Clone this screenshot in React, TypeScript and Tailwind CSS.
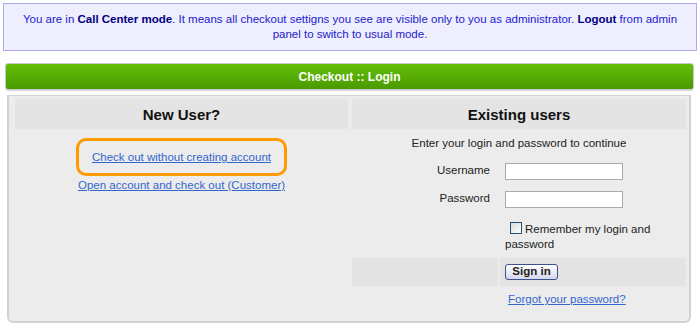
export default function App() {
  return (
    <div className="w-[700px] h-[329px] bg-white pt-[3px] font-['Liberation_Sans',Arial,sans-serif] text-[11.5px] text-[#222]">
      {/* Call center notice */}
      <div className="ml-[3px] w-[694px] h-[48px] border border-[#aaaaee] bg-[#eeeeff] px-[10px] pt-[8px] text-center leading-[15px] text-[#2222cc]">
        You are in <b className="text-[#000080]">Call Center mode</b>. It means all checkout settigns you see are visible only to you as administrator.{' '}
        <b className="text-[#000080]">Logout</b> from admin
        <br />
        panel to switch to usual mode.
      </div>

      {/* Title bar */}
      <div className="mt-[12px] ml-[5px] w-[689px] h-[27px] rounded-[3px] border border-[#c9c9c9] bg-linear-to-b from-[#63bf08] to-[#4a9a00] text-center text-[12px] font-bold leading-[27px] text-white shadow-[0_1px_1px_#d8d8d8]">
        Checkout :: Login
      </div>

      {/* Panel */}
      <div className="mt-[5px] ml-[7px] w-[684px] h-[228px] rounded-b-[6px] border-2 border-t border-[#d2d2d2] bg-[#ececec] pl-[6px] pr-[2px] pt-[3px]">
        <div className="grid grid-cols-[333px_334px] gap-x-[4px]">
          {/* New user */}
          <div>
            <div className="h-[30px] bg-[#e4e4e4] text-center text-[15px] font-bold leading-[31px] text-[#111]">New User?</div>
            <div className="mt-[9px] flex flex-col items-center">
              <div className="flex h-[38px] w-[211px] items-center justify-center rounded-[10px] border-[3px] border-[#ff9900]">
                <a className="text-[#3366cc] underline leading-[14px]" href="#">Check out without creating account</a>
              </div>
              <a className="mt-[1px] text-[#3366cc] underline leading-[16px]" href="#">Open account and check out (Customer)</a>
            </div>
          </div>

          {/* Existing users */}
          <div>
            <div className="h-[30px] bg-[#e4e4e4] text-center text-[15px] font-bold leading-[31px] text-[#111]">Existing users</div>
            <div className="mt-[7px] text-center leading-[14px]">Enter your login and password to continue</div>
            <div className="mt-[8px] grid grid-cols-[146px_186px] gap-[2px]">
              <div className="flex h-[26px] items-center justify-end pr-[8px]">Username</div>
              <div className="flex h-[26px] items-center pl-[5px]">
                <div className="h-[17px] w-[118px] border border-[#a5acb2] bg-white" />
              </div>
              <div className="flex h-[26px] items-center justify-end pr-[8px]">Password</div>
              <div className="flex h-[26px] items-center pl-[5px]">
                <div className="h-[17px] w-[118px] border border-[#a5acb2] bg-white" />
              </div>
              <div className="h-[42px]" />
              <div className="h-[42px] w-[170px] pl-[5px] pt-[8px] leading-[15px]">
                <span className="ml-[5px] mr-[3px] inline-block h-[12px] w-[12px] align-[-1px] border border-[#1c5180] bg-linear-to-br from-[#dcdcd6] to-white" />
                Remember my login and password
              </div>
              <div className="h-[28px] bg-[#e4e4e4]" />
              <div className="flex h-[28px] items-center bg-[#e4e4e4] pl-[5px]">
                <div className="flex h-[16px] w-[53px] items-center justify-center rounded-[3px] border border-[#3c4f8f] bg-linear-to-b from-white to-[#d6d6ee] text-[11.5px] font-bold text-[#222]">
                  Sign in
                </div>
              </div>
              <div />
              <div className="pl-[8px] pt-[4px] leading-[14px]">
                <a className="text-[#3366cc] underline" href="#">Forgot your password?</a>
              </div>
            </div>
          </div>
        </div>
      </div>
    </div>
  );
}
